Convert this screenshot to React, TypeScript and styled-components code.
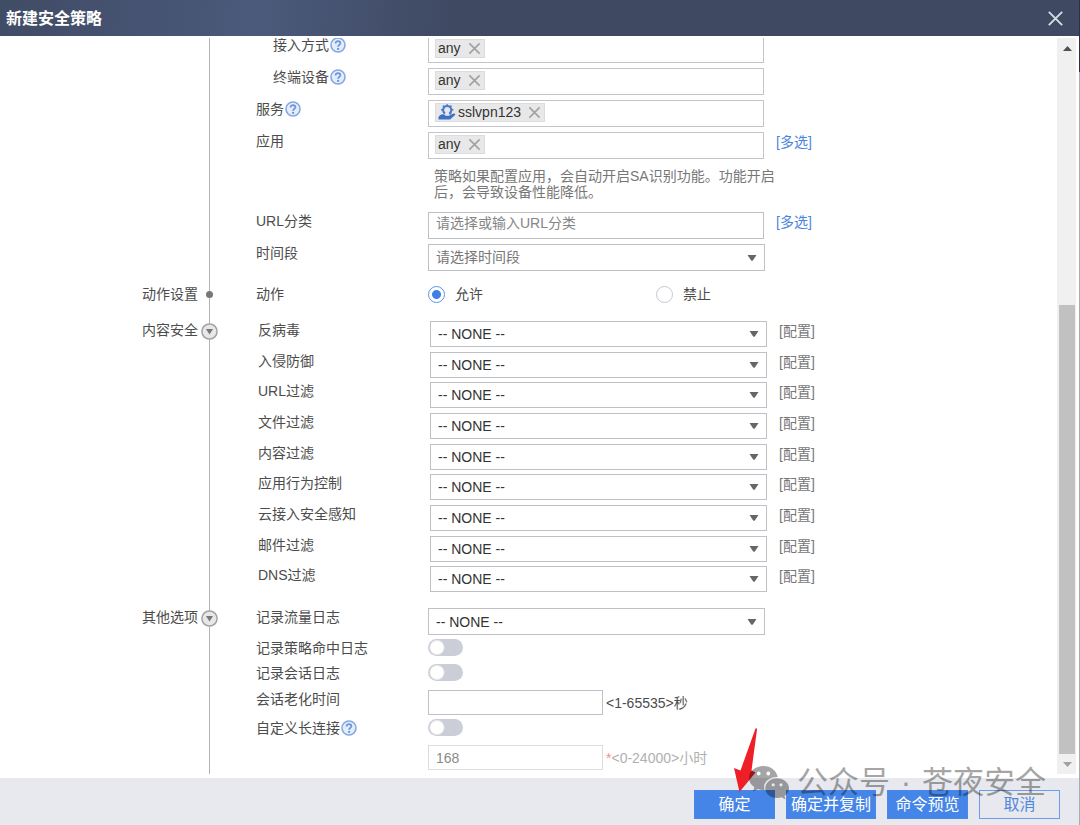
import React from "react";
import styled, { createGlobalStyle, css } from "styled-components";

const GlobalStyle = createGlobalStyle`
  *, *::before, *::after { box-sizing: border-box; }
  body { margin: 0; background: #fff; }
  body, button, input, select {
    font-family: "Liberation Sans", "Noto Sans CJK SC", sans-serif;
    font-size: 14px;
    line-height: 18px;
    color: #4c4c4c;
  }
`;

const Screen = styled.div`
  display: flex;
  min-height: 100vh;
`;

const Backdrop = styled.div`
  flex: none;
  width: 1px;
  background: linear-gradient(#2b3245 72px, #a8abb0 72px);
`;

const Dialog = styled.section`
  flex: 1;
  min-width: 0;
  display: flex;
  flex-direction: column;
  background: #fff;
`;

const TitleBar = styled.header`
  display: flex;
  align-items: center;
  justify-content: space-between;
  height: 36px;
  padding: 0 15px 0 6px;
  background: linear-gradient(100deg, #414c65 0%, #455270 12%, #4b5a7b 24%, #3f4962 42%, #3f4962 100%);
`;

const Title = styled.h1`
  margin: 0;
  padding-top: 2px;
  font-size: 16px;
  line-height: 24px;
  font-weight: 700;
  color: #fff;
`;

const CloseButton = styled.button`
  display: flex;
  padding: 0;
  border: 0;
  background: none;
  color: #d6dae2;
`;

const Body = styled.div`
  flex: 1;
  display: flex;
  padding: 2px 3px 4px 0;
`;

const Viewport = styled.div`
  flex: 1;
  min-width: 0;
  overflow: hidden;
`;

const Form = styled.form`
  display: flex;
  flex-direction: column;
  height: calc(100% + 2px);
  margin-top: -2px;
`;

const Section = styled.div<{ $lead: number; $grow?: boolean }>`
  --lead: ${(p) => p.$lead}px;
  display: grid;
  grid-template-columns: 198px 23px 1fr;
  flex: ${(p) => (p.$grow ? 1 : "none")};
`;

const SectionLabel = styled.div`
  text-align: right;
  padding-top: var(--lead);
`;

const Axis = styled.div`
  display: flex;
  flex-direction: column;
  align-items: center;
  padding-top: var(--lead);
  background: linear-gradient(#b4b4b4, #b4b4b4) center / 1px 100% no-repeat;
`;

const Dot = styled.span`
  width: 7px;
  height: 7px;
  margin-top: 6px;
  border-radius: 50%;
  background: #777;
`;

const FoldButton = styled.button`
  display: flex;
  margin-top: 2px;
  padding: 0;
  border: 0;
  background: none;
`;

const Rows = styled.div<{ $even?: boolean }>`
  padding: var(--lead) 0 0 35px;
  ${(p) =>
    p.$even &&
    css`
      display: grid;
      grid-auto-rows: 1fr;
      height: 285px;
      padding-left: 37px;
    `}
`;

const Row = styled.div<{ $height?: number }>`
  display: flex;
  align-items: flex-start;
  height: ${(p) => (p.$height ? p.$height + "px" : "auto")};
`;

const Caption = styled.div<{ $indent?: boolean }>`
  flex: none;
  display: flex;
  gap: 1px;
  width: 172px;
  padding-left: ${(p) => (p.$indent ? 17 : 0)}px;
  white-space: nowrap;
`;

const HelpButton = styled.button`
  display: flex;
  padding: 1px 0 0;
  border: 0;
  background: none;
`;

const TagBox = styled.div`
  width: 336px;
  height: 27px;
  padding: 2px 6px;
  border: 1px solid #c4c5ca;
`;

const Tag = styled.span`
  display: inline-flex;
  align-items: center;
  gap: 2px;
  height: 19px;
  padding: 0 3px 1px 2px;
  border: 1px solid #dcdcdc;
  background: #e8e8e8;
  color: #333;
  vertical-align: top;
`;

const TagRemove = styled.button`
  display: flex;
  margin-left: 5px;
  padding: 0;
  border: 0;
  background: none;
  color: #a2a2a2;
`;

const fieldBorder = css`
  border: 1px solid #c0c1c7;
  border-radius: 0;
  background: #fff;
  outline: 0;
`;

const TextInput = styled.input<{ $wide?: boolean }>`
  ${fieldBorder}
  width: ${(p) => (p.$wide ? 336 : 175)}px;
  height: ${(p) => (p.$wide ? 27 : 25)}px;
  padding: ${(p) => (p.$wide ? "0 7px 5px" : "1px 7px 0")};
  &::placeholder { color: #858585; opacity: 1; }
  &:disabled { border-color: #dcdcdc; color: #8a8a8a; }
`;

const SelectBox = styled.div`
  display: grid;
  width: 337px;
  align-items: center;
  & > * { grid-area: 1 / 1; }
  & > svg { justify-self: end; margin-right: 8px; pointer-events: none; }
`;

const Select = styled.select<{ $muted?: boolean; $short?: boolean }>`
  ${fieldBorder}
  appearance: none;
  width: 100%;
  height: ${(p) => (p.$short ? 26 : 27)}px;
  padding: ${(p) => (p.$muted ? "0 24px 2px 7px" : "0 24px 0 7px")};
  color: ${(p) => (p.$muted ? "#777" : "#333")};
`;

const Note = styled.p`
  max-width: 354px;
  margin: 0;
  padding: 4px 0 0 6px;
  line-height: 16px;
  color: #777;
`;

const PickLink = styled.a`
  margin: 1px 0 0 12px;
  color: #4a86e0;
  text-decoration: none;
`;

const ConfigLink = styled(PickLink)`
  color: #777;
`;

const RadioLabel = styled.label`
  display: flex;
  align-items: center;
  gap: 10px;
  width: 228px;
`;

const Radio = styled.input`
  appearance: none;
  width: 17px;
  height: 17px;
  margin: 0;
  border: 1px solid #c6c9d0;
  border-radius: 50%;
  background: #fff;
  &:checked {
    border-color: #5a94ec;
    background: radial-gradient(circle, #3f80e8 4px, #fff 5px);
  }
`;

const Switch = styled.input`
  appearance: none;
  width: 35px;
  height: 17px;
  margin: 0;
  border-radius: 9px;
  background: radial-gradient(circle at 9px 50%, #fff 6px, #cbced6 8px);
  &:checked { background: radial-gradient(circle at 26px 50%, #fff 6px, #4585e8 8px); }
`;

const Range = styled.span<{ $muted?: boolean }>`
  padding: 4px 0 0 3px;
  color: ${(p) => (p.$muted ? "#b0b0b0" : "#4c4c4c")};
`;

const Star = styled.span`
  color: #f5908c;
`;

const Scrollbar = styled.div`
  flex: none;
  display: flex;
  flex-direction: column;
  width: 19px;
  padding: 0 1px 0 2px;
  background: #f0f0f0;
`;

const ScrollButton = styled.button`
  flex: none;
  display: flex;
  align-items: center;
  justify-content: center;
  height: 20px;
  padding: 0;
  border: 0;
  background: none;
`;

const Spacer = styled.div`
  flex: 247;
`;

const Thumb = styled.div`
  flex: 450;
  background: #c1c1c1;
`;

const Footer = styled.footer`
  position: relative;
  display: flex;
  justify-content: flex-end;
  align-items: flex-start;
  gap: 11px;
  height: 47px;
  padding: 12px 19px 0 0;
  background: #e8e9ee;
`;

const ActionButton = styled.button<{ $outline?: boolean }>`
  min-width: 81px;
  height: 29px;
  padding: 0 4px;
  border: 1px solid ${(p) => (p.$outline ? "#6b9eea" : "#4a88e8")};
  background: ${(p) => (p.$outline ? "transparent" : "#4585e8")};
  color: ${(p) => (p.$outline ? "#5088de" : "#fff")};
  font-size: 16px;
  line-height: 20px;
  white-space: nowrap;
`;

const Pointer = styled.svg`
  position: absolute;
  right: 320px;
  top: -51px;
  pointer-events: none;
`;

const Watermark = styled.div`
  position: absolute;
  right: 33px;
  top: -17px;
  display: flex;
  align-items: center;
  gap: 8px;
  font-size: 31px;
  line-height: 44px;
  white-space: pre;
  color: #000;
  opacity: 0.35;
  pointer-events: none;
`;

const Middot = styled.span`
  display: inline-block;
  width: 32px;
  text-align: center;
`;

const Help = ({ name }: { name: string }) => (
  <HelpButton type="button" aria-label={name + "说明"}>
    <svg width="16" height="16" viewBox="0 0 16 16">
      <circle cx="8" cy="8" r="7" fill="#e4edfb" stroke="#86a8e2" strokeWidth="1.6" />
      <path d="M5.6 6.4C5.6 3.4 10.5 3.5 10.4 6.3C10.3 7.8 8.1 8 8.1 9.8" fill="none" stroke="#6a93da" strokeWidth="1.8" />
      <rect x="7.1" y="10.9" width="2" height="1.9" fill="#6a93da" />
    </svg>
  </HelpButton>
);

const Cross = ({ size, width }: { size: number; width: number }) => (
  <svg width={size} height={size} viewBox="0 0 14 14">
    <path d="M1.500 1.500L12.500 12.500M12.500 1.500L1.500 12.500" stroke="currentColor" strokeWidth={width} fill="none" />
  </svg>
);

const Caret = () => (
  <svg width="10" height="6" viewBox="0 0 10 6">
    <path d="M0.5 0H9.5L6 5.2Q5 6.2 4 5.2Z" fill="#666" />
  </svg>
);

const ServiceIcon = () => (
  <svg width="18" height="16" viewBox="0 0 18 16">
    <path d="M7 9.600C3.900 7.500 4.600 2 9.200 2C13.800 2 14.500 7.500 11.400 9.600" fill="none" stroke="#4a7bd0" strokeWidth="2" />
    <path d="M9.200 0.300V2M3 5.800H5M13.400 5.800H15.400M4.900 1.700L6.300 3M13.500 1.700L12.100 3M11 9.500L13.500 10" stroke="#4a7bd0" strokeWidth="1.600" />
    <path d="M0.500 15.500V13C2.500 9.800 5.500 9.600 7.500 11.800H11L16.200 9.200L17.400 10.800L12 15.500Z" fill="#3f70c8" />
  </svg>
);

const Fold = ({ name }: { name: string }) => (
  <FoldButton type="button" aria-label={"收起" + name}>
    <svg width="17" height="17" viewBox="0 0 17 17">
      <circle cx="8.5" cy="8.5" r="7.6" fill="#e6e7e9" stroke="#a3a3a3" strokeWidth="1.5" />
      <path d="M5 6H12L8.5 11.5Z" fill="#777" />
    </svg>
  </FoldButton>
);

const TagField = ({ value, icon }: { value: string; icon?: React.ReactNode }) => (
  <TagBox>
    <Tag>
      {icon}
      {value}
      <TagRemove type="button" aria-label={"移除" + value}>
        <Cross size={13} width={1.8} />
      </TagRemove>
    </Tag>
  </TagBox>
);

const NoneSelect = ({ id, short }: { id: string; short?: boolean }) => (
  <SelectBox>
    <Select id={id} $short={short}>
      <option>-- NONE --</option>
    </Select>
    <Caret />
  </SelectBox>
);

const profiles = [
  "反病毒",
  "入侵防御",
  "URL过滤",
  "文件过滤",
  "内容过滤",
  "应用行为控制",
  "云接入安全感知",
  "邮件过滤",
  "DNS过滤",
];

export default function App() {
  return (
    <Screen>
      <GlobalStyle />
      <Dialog>
        <TitleBar>
          <Title>新建安全策略</Title>
          <CloseButton type="button" aria-label="关闭">
            <Cross size={17} width={1.6} />
          </CloseButton>
        </TitleBar>
        <Body>
          <Viewport>
            <Form>
              <Section $lead={0}>
                <SectionLabel />
                <Axis />
                <Rows>
                  <Row $height={32}>
                    <Caption $indent>接入方式<Help name="接入方式" /></Caption>
                    <TagField value="any" />
                  </Row>
                  <Row $height={32}>
                    <Caption $indent>终端设备<Help name="终端设备" /></Caption>
                    <TagField value="any" />
                  </Row>
                  <Row $height={32}>
                    <Caption>服务<Help name="服务" /></Caption>
                    <TagField value="sslvpn123" icon={<ServiceIcon />} />
                  </Row>
                  <Row $height={32}>
                    <Caption>应用</Caption>
                    <TagField value="any" />
                    <PickLink href="#apps">[多选]</PickLink>
                  </Row>
                  <Row $height={48}>
                    <Caption />
                    <Note>策略如果配置应用，会自动开启SA识别功能。功能开启后，会导致设备性能降低。</Note>
                  </Row>
                  <Row $height={32}>
                    <Caption><label htmlFor="url">URL分类</label></Caption>
                    <TextInput id="url" $wide placeholder="请选择或输入URL分类" />
                    <PickLink href="#urls">[多选]</PickLink>
                  </Row>
                  <Row $height={32}>
                    <Caption><label htmlFor="period">时间段</label></Caption>
                    <SelectBox>
                      <Select id="period" $muted>
                        <option>请选择时间段</option>
                      </Select>
                      <Caret />
                    </SelectBox>
                  </Row>
                </Rows>
              </Section>

              <Section $lead={9}>
                <SectionLabel>动作设置</SectionLabel>
                <Axis><Dot /></Axis>
                <Rows>
                  <Row $height={27}>
                    <Caption>动作</Caption>
                    <RadioLabel>
                      <Radio type="radio" name="action" defaultChecked />
                      允许
                    </RadioLabel>
                    <RadioLabel>
                      <Radio type="radio" name="action" />
                      禁止
                    </RadioLabel>
                  </Row>
                </Rows>
              </Section>

              <Section $lead={9}>
                <SectionLabel>内容安全</SectionLabel>
                <Axis><Fold name="内容安全" /></Axis>
                <Rows $even>
                  {profiles.map((name, i) => (
                    <Row key={name}>
                      <Caption><label htmlFor={"profile" + i}>{name}</label></Caption>
                      <NoneSelect id={"profile" + i} short />
                      <ConfigLink href={"#profile" + i}>[配置]</ConfigLink>
                    </Row>
                  ))}
                </Rows>
              </Section>

              <Section $lead={11} $grow>
                <SectionLabel>其他选项</SectionLabel>
                <Axis><Fold name="其他选项" /></Axis>
                <Rows>
                  <Row $height={31}>
                    <Caption><label htmlFor="traffic">记录流量日志</label></Caption>
                    <NoneSelect id="traffic" />
                  </Row>
                  <Row $height={25}>
                    <Caption><label htmlFor="hit">记录策略命中日志</label></Caption>
                    <Switch id="hit" type="checkbox" role="switch" />
                  </Row>
                  <Row $height={26}>
                    <Caption><label htmlFor="session">记录会话日志</label></Caption>
                    <Switch id="session" type="checkbox" role="switch" />
                  </Row>
                  <Row $height={29}>
                    <Caption><label htmlFor="aging">会话老化时间</label></Caption>
                    <TextInput id="aging" />
                    <Range>&lt;1-65535&gt;秒</Range>
                  </Row>
                  <Row $height={26}>
                    <Caption><label htmlFor="long">自定义长连接</label><Help name="自定义长连接" /></Caption>
                    <Switch id="long" type="checkbox" role="switch" />
                  </Row>
                  <Row $height={25}>
                    <Caption />
                    <TextInput aria-label="长连接时间" defaultValue="168" disabled />
                    <Range $muted><Star>*</Star>&lt;0-24000&gt;小时</Range>
                  </Row>
                </Rows>
              </Section>
            </Form>
          </Viewport>
          <Scrollbar>
            <ScrollButton type="button" aria-label="向上滚动">
              <svg width="9" height="5" viewBox="0 0 9 5"><path d="M0 5L4.5 0L9 5Z" fill="#505050" /></svg>
            </ScrollButton>
            <Spacer />
            <Thumb />
            <ScrollButton type="button" aria-label="向下滚动">
              <svg width="9" height="5" viewBox="0 0 9 5"><path d="M0 0L4.5 5L9 0Z" fill="#a0a0a0" /></svg>
            </ScrollButton>
          </Scrollbar>
        </Body>
        <Footer>
          <ActionButton type="button">确定</ActionButton>
          <ActionButton type="button">确定并复制</ActionButton>
          <ActionButton type="button">命令预览</ActionButton>
          <ActionButton type="button" $outline>取消</ActionButton>
          <Pointer width="26" height="68" viewBox="0 0 26 68">
            <path d="M22.5 1.5Q24 0.5 24 2.5L18.500 43.500L22.500 45.500L6.500 65L1 41L7.500 43.500L22.500 1.500Z" fill="#ee1f27" />
          </Pointer>
          <Watermark>
            <svg width="40" height="34" viewBox="0 0 40 34">
              <path
                fillRule="evenodd"
                fill="#000"
                d="M14.5 0C6.500 0 0 5.300 0 12C0 15.800 2 19 5.400 21.200L4 25.500L9 23C11 23.700 13 24 15.500 23.900C13.500 17 19 11 28.800 11C27.500 4.500 21.500 0 14.500 0ZM9.700 5.600A1.900 1.900 0 1 1 9.700 9.400A1.900 1.900 0 1 1 9.700 5.600ZM19.300 5.600A1.900 1.900 0 1 1 19.300 9.400A1.900 1.900 0 1 1 19.300 5.600ZM28 12.300C21.400 12.300 16.300 16.800 16.300 22.200C16.300 27.600 21.400 32 28 32C29.700 32 31.200 31.800 32.600 31.300L36.600 33.500L35.500 29.900C38.200 28.100 40 25.300 40 22.200C40 16.800 34.600 12.300 28 12.300ZM24.200 17.200A1.600 1.600 0 1 1 24.200 20.400A1.600 1.600 0 1 1 24.200 17.200ZM32 17.200A1.600 1.600 0 1 1 32 20.400A1.600 1.600 0 1 1 32 17.200Z"
              />
            </svg>
            <span>公众号<Middot>·</Middot>苍夜安全</span>
          </Watermark>
        </Footer>
      </Dialog>
      <Backdrop />
    </Screen>
  );
}
